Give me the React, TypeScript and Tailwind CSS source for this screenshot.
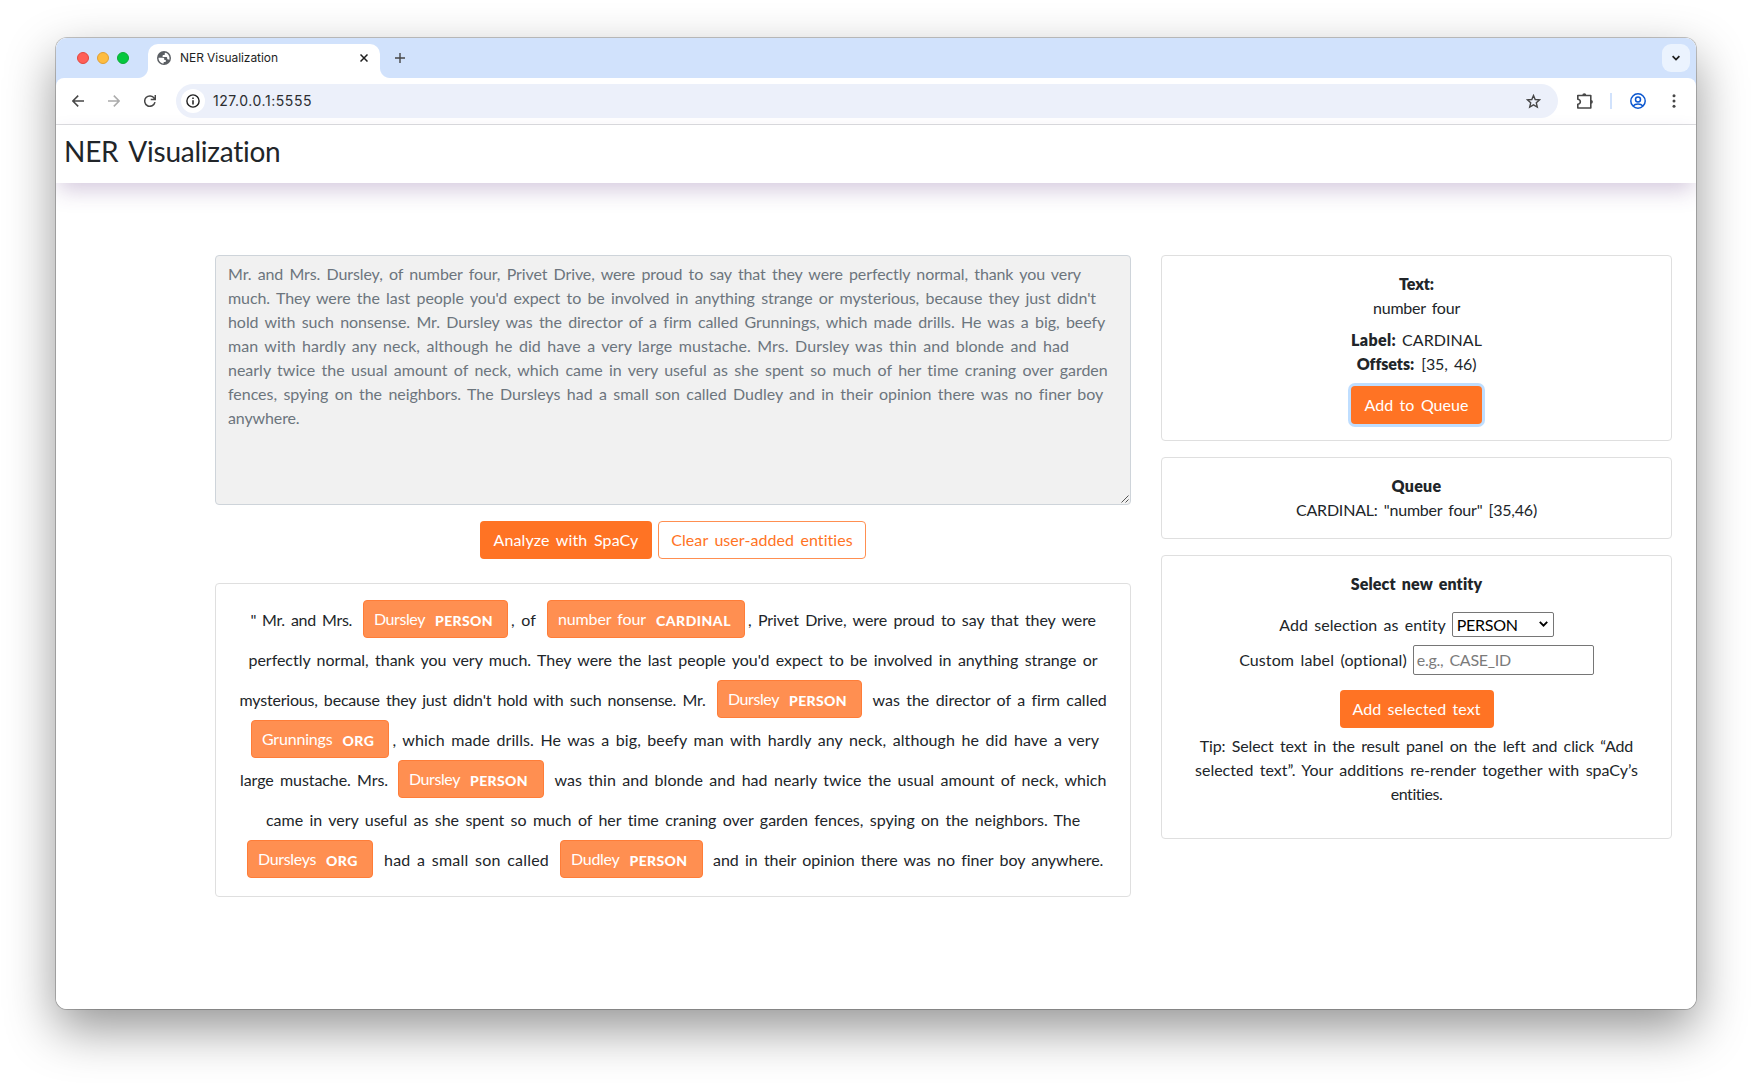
import { useLayoutEffect, useRef } from "react";

/** A run of text whose tracking is adjusted so that it takes up `w` pixels. */
function Fit({ w, className = "", children }: { w: number; className?: string; children: string }) {
  const ref = useRef<HTMLSpanElement>(null);
  useLayoutEffect(() => {
    const el = ref.current;
    if (!el) return;
    el.style.letterSpacing = "0px";
    const natural = el.getBoundingClientRect().width;
    el.style.letterSpacing = `${(w - natural) / children.length}px`;
  }, [w, children]);
  return (
    <span ref={ref} className={`inline-block shrink-0 whitespace-pre [word-spacing:2.3px] ${className}`}>
      {children}
    </span>
  );
}

type Seg = { t: string; w: number; ml?: number; label?: string; tw?: number; lw?: number };

const passage: [string, number][] = [
  ["Mr. and Mrs. Dursley, of number four, Privet Drive, were proud to say that they were perfectly normal, thank you very", 853],
  ["much. They were the last people you'd expect to be involved in anything strange or mysterious, because they just didn't", 868],
  ["hold with such nonsense. Mr. Dursley was the director of a firm called Grunnings, which made drills. He was a big, beefy", 877],
  ["man with hardly any neck, although he did have a very large mustache. Mrs. Dursley was thin and blonde and had", 841],
  ["nearly twice the usual amount of neck, which came in very useful as she spent so much of her time craning over garden", 880],
  ["fences, spying on the neighbors. The Dursleys had a small son called Dudley and in their opinion there was no finer boy", 875],
  ["anywhere.", 71.5],
];

const rows: { pl: number; segs: Seg[] }[] = [
  {
    pl: 34.5,
    segs: [
      { t: '"', w: 5 },
      { t: "Mr. and Mrs.", w: 90, ml: 6.5 },
      { t: "Dursley", w: 145, ml: 11, label: "PERSON", tw: 51, lw: 58 },
      { t: ", of", w: 25, ml: 3 },
      { t: "number four", w: 198, ml: 11, label: "CARDINAL", tw: 88, lw: 75 },
      { t: ", Privet Drive, were proud to say that they were", w: 348, ml: 3 },
    ],
  },
  { pl: 32.5, segs: [{ t: "perfectly normal, thank you very much. They were the last people you'd expect to be involved in anything strange or", w: 849 }] },
  {
    pl: 23.5,
    segs: [
      { t: "mysterious, because they just didn't hold with such nonsense. Mr.", w: 466 },
      { t: "Dursley", w: 145, ml: 11.5, label: "PERSON", tw: 51, lw: 58 },
      { t: "was the director of a firm called", w: 234, ml: 10.5 },
    ],
  },
  {
    pl: 35,
    segs: [
      { t: "Grunnings", w: 138, label: "ORG", tw: 70.5, lw: 32 },
      { t: ", which made drills. He was a big, beefy man with hardly any neck, although he did have a very", w: 706.5, ml: 3.5 },
    ],
  },
  {
    pl: 24,
    segs: [
      { t: "large mustache. Mrs.", w: 148 },
      { t: "Dursley", w: 146, ml: 10, label: "PERSON", tw: 51, lw: 58 },
      { t: "was thin and blonde and had nearly twice the usual amount of neck, which", w: 552, ml: 10.5 },
    ],
  },
  { pl: 50, segs: [{ t: "came in very useful as she spent so much of her time craning over garden fences, spying on the neighbors. The", w: 814.5 }] },
  {
    pl: 31,
    segs: [
      { t: "Dursleys", w: 126, label: "ORG", tw: 58, lw: 32 },
      { t: "had a small son called", w: 165, ml: 11 },
      { t: "Dudley", w: 143, ml: 11, label: "PERSON", tw: 48.5, lw: 58 },
      { t: "and in their opinion there was no finer boy anywhere.", w: 390, ml: 10 },
    ],
  },
];

function Entity({ seg }: { seg: Seg }) {
  return (
    <span
      className="flex h-[38px] shrink-0 rounded-[4px] border border-[#ff7d38] bg-[#ff8f51] pl-[10px] text-white"
      style={{ width: seg.w, marginLeft: seg.ml ?? 0 }}
    >
      <Fit w={seg.tw ?? 0} className="leading-[36px]">{seg.t}</Fit>
      <Fit w={seg.lw ?? 0} className="ml-[10px] text-[14px] leading-[39px] font-black">{seg.label ?? ""}</Fit>
    </span>
  );
}

const primary = "flex h-[38px] items-center justify-center rounded-[4px] bg-[#ff7324] text-white";

function BrowserChrome() {
  return (
    <>
      <div className="flex h-10 bg-[#d1e2fc]">
        <div className="flex w-[92px] items-center gap-2 pl-[21px]">
          <span className="size-3 rounded-full border border-[#e2463f] bg-[#ff5f57]" />
          <span className="size-3 rounded-full border border-[#e0a033] bg-[#febc40]" />
          <span className="size-3 rounded-full border border-[#0eab35] bg-[#05c83f]" />
        </div>
        <div className="relative mt-[6px] flex h-[34px] w-[232px] items-center rounded-t-[10px] bg-white pb-[6px] pl-[9px]">
          <span className="absolute bottom-0 -left-[10px] size-[10px] bg-[radial-gradient(circle_at_0_0,#d1e2fc_9.5px,#fff_10.5px)]" />
          <span className="absolute -right-[10px] bottom-0 size-[10px] bg-[radial-gradient(circle_at_100%_0,#d1e2fc_9.5px,#fff_10.5px)]" />
          <svg className="size-[14px]" viewBox="0 0 14 14">
            <circle cx="7" cy="7" r="7" fill="#5a5e63" />
            <path d="M1.500 6.800h4.200c1 0 1.600.5 1.600 1.300v.8h1.500v1.300c0 .6-.4.900-1 .900H6.700v1.500C3.700 12.600 1.500 10 1.500 6.800z" fill="#fff" />
            <path d="M8.600 1.700c2.300.7 3.900 2.800 3.900 5.400 0 .7-.1 1.300-.3 1.800-.3-.5-.7-.7-1.300-.700h-.7V6.900c0-.5-.3-.8-.8-.800H5.600V4.700c0-.5.3-.8.8-.800h1.300V2.700c0-.5.3-.9.900-1z" fill="#fff" />
          </svg>
          <Fit w={98} className="ml-[9px] font-['Inter'] text-[12px] leading-4 text-[#1f1f1f] ![word-spacing:0px]">NER Visualization</Fit>
          <svg className="ml-[82px] size-[8px]" viewBox="0 0 8 8" stroke="#1f1f1f" strokeWidth="1.5">
            <path d="M.5.5l7 7M7.500.5l-7 7" />
          </svg>
        </div>
        <svg className="mt-[15px] ml-[15px] size-[10px]" viewBox="0 0 10 10" stroke="#474747" strokeWidth="1.400">
          <path d="M5 0v10M0 5h10" />
        </svg>
        <div className="mt-[6px] mr-[6px] ml-auto flex size-[28px] items-center justify-center rounded-[9px] bg-[#ebf3fe]">
          <svg className="size-[8px]" viewBox="0 0 8 8" fill="none" stroke="#1f1f1f" strokeWidth="1.800">
            <path d="M.6 2.200L4 5.600l3.400-3.400" />
          </svg>
        </div>
      </div>
      <div className="bg-[#d1e2fc]">
        <div className="flex h-[47px] items-center rounded-t-[8px] border-b border-[#dcdddf] bg-white">
          <svg className="ml-4 size-3" viewBox="0 0 12 12" fill="none" stroke="#474747" strokeWidth="1.500">
            <path d="M12 6H1M6.200.600L.900 6l5.300 5.400" />
          </svg>
          <svg className="ml-6 size-3" viewBox="0 0 12 12" fill="none" stroke="#ababab" strokeWidth="1.500">
            <path d="M0 6h11M5.800.600L11.100 6l-5.300 5.400" />
          </svg>
          <svg className="ml-6 size-3" viewBox="0 0 12 12" fill="none" stroke="#474747" strokeWidth="1.500">
            <path d="M11 7.200A5.200 5.200 0 1 1 10.300 3.300L11 4.200M11.300 0v4.500H6.700" />
          </svg>
          <div className="ml-[20px] flex h-[34px] w-[1382px] items-center rounded-full bg-[#ecf0fa] pl-[5px]">
            <span className="flex size-6 items-center justify-center rounded-full bg-white">
              <svg className="size-[14px]" viewBox="0 0 14 14" fill="none" stroke="#1f1f1f" strokeWidth="1.400">
                <circle cx="7" cy="7" r="6.100" />
                <path d="M7 6.200v4.200M7 3.500v1.500" strokeWidth="1.500" />
              </svg>
            </span>
            <Fit w={99} className="ml-[8px] font-['Inter'] text-[14px] leading-5 text-[#2b2d30]">127.0.0.1:5555</Fit>
            <svg className="mr-[17px] ml-auto size-[15px]" viewBox="0 0 15 15" fill="none" stroke="#474747" strokeWidth="1.400">
              <path d="M7.500 1.500l1.700 4 4.400.400-3.300 2.900 1 4.300-3.800-2.300-3.800 2.300 1-4.300L1.400 5.900l4.400-.4z" />
            </svg>
          </div>
          <svg className="ml-[18px] size-[17px]" viewBox="0 0 17 17" fill="none" stroke="#474747" strokeWidth="1.600">
            <path d="M1.800 2.500h13v12.500h-13v-3.700a2.300 2.300 0 0 0 0-5.100z" strokeLinejoin="round" />
            <path d="M6.300 2.200a2 2 0 0 1 4 0zM15 6.900a1.900 1.900 0 0 1 0 3.800z" fill="#474747" stroke="none" />
          </svg>
          <span className="ml-[17px] h-4 w-[2px] bg-[#d1e2fc]" />
          <svg className="ml-[18px] size-4" viewBox="0 0 16 16" fill="none" stroke="#0b57d0" strokeWidth="1.500">
            <circle cx="8" cy="8" r="7.200" />
            <circle cx="8" cy="6.400" r="2.500" />
            <path d="M3 13c1.400-1.500 3-2 5-2s3.600.500 5 2" />
          </svg>
          <svg className="ml-[26px] h-[14px] w-[4px]" viewBox="0 0 4 14" fill="#474747">
            <circle cx="2" cy="1.700" r="1.500" />
            <circle cx="2" cy="7" r="1.500" />
            <circle cx="2" cy="12.300" r="1.500" />
          </svg>
        </div>
      </div>
    </>
  );
}

export default function App() {
  return (
    <div className="h-[1083px] w-[1752px] overflow-hidden bg-white px-[56px] pt-[38px] font-['Lato',sans-serif] text-[16px] leading-6 text-[#212529]">
      <div className="h-[971px] w-[1640px] rounded-[11px] shadow-[0_0_0_1px_rgba(0,0,0,0.22),0_20px_50px_rgba(0,0,0,0.42)]">
        <div className="h-full overflow-hidden rounded-[11px] bg-white">
          <BrowserChrome />
          <header className="h-[58px] pt-[8px] pl-[8px] shadow-[0_10px_22px_-3px_rgba(90,45,125,0.26)]">
            <Fit w={217} className="text-[28px] leading-9 ![word-spacing:4px]">NER Visualization</Fit>
          </header>

          <main className="flex items-start gap-[30px] pt-[72px] pl-[159px]">
            <section className="w-[916px]">
              <div className="relative flex h-[250px] flex-col items-start rounded-[4px] border border-[#ced4da] bg-[#f1f1f1] pt-[6px] pl-[12px] text-[#6c757d]">
                {passage.map(([t, w]) => (
                  <Fit key={t} w={w}>{t}</Fit>
                ))}
                <svg className="absolute right-px bottom-px size-[8px]" viewBox="0 0 8 8" stroke="#555" strokeWidth="1">
                  <path d="M.5 7.500l7-7M4.500 7.500l3-3" />
                </svg>
              </div>
              <div className="mt-4 flex justify-center gap-[6px]">
                <button className={`${primary} w-[172px]`}>
                  <Fit w={145}>Analyze with SpaCy</Fit>
                </button>
                <button className="flex h-[38px] w-[208px] items-center justify-center rounded-[4px] border border-[#ff8f51] text-[#ff7324]">
                  <Fit w={182}>Clear user-added entities</Fit>
                </button>
              </div>
              <div className="mt-6 h-[314px] rounded-[4px] border border-[#dfdfdf] pt-4">
                {rows.map((r, i) => (
                  <div key={i} className="flex h-10" style={{ paddingLeft: r.pl }}>
                    {r.segs.map((s, j) =>
                      s.label ? (
                        <Entity key={j} seg={s} />
                      ) : (
                        <span key={j} className="shrink-0 leading-[40px]" style={{ width: s.w, marginLeft: s.ml ?? 0 }}>
                          <Fit w={s.w}>{s.t}</Fit>
                        </span>
                      ),
                    )}
                  </div>
                ))}
              </div>
            </section>

            <aside className="flex w-[511px] flex-col gap-4">
              <div className="flex h-[186px] flex-col items-center rounded-[4px] border border-[#dfdfdf] pt-4">
                <Fit w={35} className="font-extrabold">Text:</Fit>
                <Fit w={87}>number four</Fit>
                <div className="mt-2 flex gap-[6px]">
                  <Fit w={45} className="font-extrabold">Label:</Fit>
                  <Fit w={80}>CARDINAL</Fit>
                </div>
                <div className="flex gap-[7px]">
                  <Fit w={57} className="font-extrabold">Offsets:</Fit>
                  <Fit w={55}>[35, 46)</Fit>
                </div>
                <button className={`${primary} mt-[10px] w-[131px] shadow-[0_0_0_3px_#bfdeff]`}>
                  <Fit w={104}>Add to Queue</Fit>
                </button>
              </div>
              <div className="flex h-[82px] flex-col items-center rounded-[4px] border border-[#dfdfdf] pt-4">
                <Fit w={50} className="font-extrabold">Queue</Fit>
                <Fit w={241}>{'CARDINAL: "number four" [35,46)'}</Fit>
              </div>
              <div className="flex h-[284px] flex-col items-center rounded-[4px] border border-[#dfdfdf] pt-4">
                <Fit w={132} className="font-extrabold">Select new entity</Fit>
                <div className="mt-[16px] flex h-[25px] items-center gap-[6px]">
                  <Fit w={167}>Add selection as entity</Fit>
                  <span className="flex h-[25px] w-[102px] items-center rounded-[2px] border border-[#767676] pr-[5px] pl-[4px] text-black">
                    <Fit w={61}>PERSON</Fit>
                    <svg className="mt-[-1px] ml-auto h-[6px] w-[9px]" viewBox="0 0 9 6" fill="none" stroke="#000" strokeWidth="1.900">
                      <path d="M.8.900L4.500 4.600 8.200.900" />
                    </svg>
                  </span>
                </div>
                <div className="mt-[8px] flex h-[30px] items-center gap-[6px]">
                  <Fit w={168}>Custom label (optional)</Fit>
                  <span className="flex h-[30px] w-[181px] items-center rounded-[2px] border border-[#767676] pl-[3px] text-[#7b7b7b]">
                    <Fit w={94}>e.g., CASE_ID</Fit>
                  </span>
                </div>
                <button className={`${primary} mt-[15px] w-[154px] shrink-0`}>
                  <Fit w={128}>Add selected text</Fit>
                </button>
                <Fit w={433} className="mt-[6px]">Tip: Select text in the result panel on the left and click “Add</Fit>
                <Fit w={443}>selected text”. Your additions re-render together with spaCy’s</Fit>
                <Fit w={52}>entities.</Fit>
              </div>
            </aside>
          </main>
        </div>
      </div>
    </div>
  );
}
